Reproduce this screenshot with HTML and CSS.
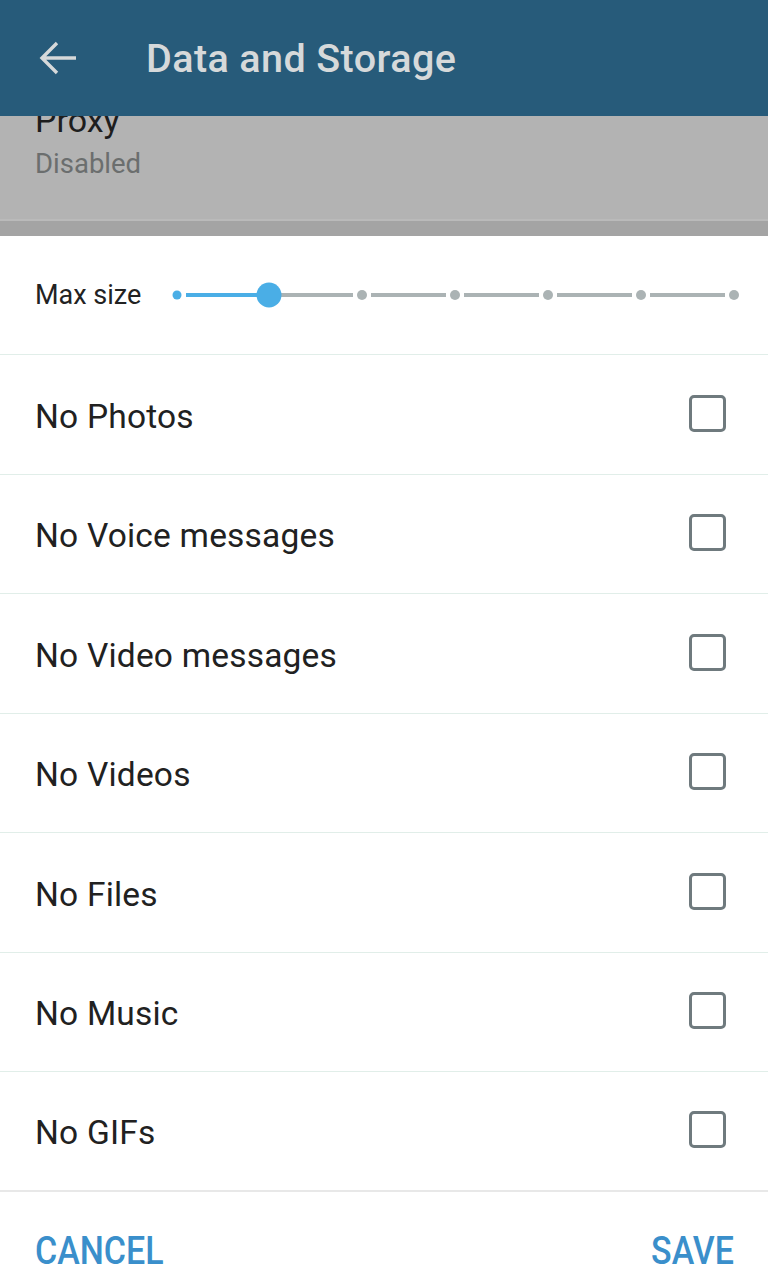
FILE: index.html
```html
<!DOCTYPE html>
<html lang="en">
<head>
  <meta charset="UTF-8">
  <meta name="viewport" content="width=device-width, initial-scale=1.0">
  <title>Data and Storage</title>
  <link rel="stylesheet" href="styles.css">
</head>
<body>
  <header class="topbar">
    <svg class="back" width="42" height="42" viewBox="0 0 42 42">
      <path d="M39 21H5M20 6L5 21l15 15" fill="none" stroke="#d6d9da" stroke-width="3.4"/>
    </svg>
    <h1>Data and Storage</h1>
  </header>

  <section class="behind">
    <p class="behind-title">Proxy</p>
    <p class="behind-sub">Disabled</p>
    <div class="behind-gap"></div>
  </section>

  <main class="sheet">
    <div class="size-row">
      <span class="size-label">Max size</span>
      <svg class="slider" width="574" height="40" viewBox="0 0 574 40">
        <line x1="16" y1="20" x2="99" y2="20" stroke="#4aaee6" stroke-width="4"/>
        <line x1="99" y1="20" x2="183" y2="20" stroke="#abb3b4" stroke-width="4"/>
        <line x1="201" y1="20" x2="276" y2="20" stroke="#abb3b4" stroke-width="4"/>
        <line x1="294" y1="20" x2="369" y2="20" stroke="#abb3b4" stroke-width="4"/>
        <line x1="387" y1="20" x2="462" y2="20" stroke="#abb3b4" stroke-width="4"/>
        <line x1="480" y1="20" x2="555" y2="20" stroke="#abb3b4" stroke-width="4"/>
        <circle cx="7" cy="20" r="4.5" fill="#4aaee6"/>
        <circle cx="192" cy="20" r="5" fill="#abb3b4"/>
        <circle cx="285" cy="20" r="5" fill="#abb3b4"/>
        <circle cx="378" cy="20" r="5" fill="#abb3b4"/>
        <circle cx="471" cy="20" r="5" fill="#abb3b4"/>
        <circle cx="564" cy="20" r="5" fill="#abb3b4"/>
        <circle cx="99" cy="20" r="12.5" fill="#4aaee6"/>
      </svg>
    </div>

    <ul class="options">
      <li><span>No Photos</span><i class="box"></i></li>
      <li><span>No Voice messages</span><i class="box"></i></li>
      <li><span>No Video messages</span><i class="box"></i></li>
      <li><span>No Videos</span><i class="box"></i></li>
      <li><span>No Files</span><i class="box"></i></li>
      <li><span>No Music</span><i class="box"></i></li>
      <li><span>No GIFs</span><i class="box"></i></li>
    </ul>

    <div class="actions">
      <button>CANCEL</button>
      <button>SAVE</button>
    </div>
  </main>
</body>
</html>
```

FILE: styles.css
```css
* {
  margin: 0;
  padding: 0;
  box-sizing: border-box;
}

body {
  font-family: Roboto, "Noto Sans", sans-serif;
  background-color: #fff;
  width: 768px;
  height: 1280px;
  overflow: hidden;
}

.topbar {
  height: 116px;
  background-color: #275b7a;
  display: flex;
  align-items: center;
  padding-left: 37px;
  position: relative;
  z-index: 1;
}

.topbar h1 {
  margin-left: 67px;
  font-size: 39.5px;
  font-weight: 500;
  color: #d6d9da;
  letter-spacing: 0.4px;
}

.behind {
  height: 120px;
  background-color: #b3b3b3;
  padding-left: 35px;
  display: flex;
  flex-direction: column;
}

.behind-title {
  font-size: 34px;
  color: #1e1e1e;
  line-height: 40px;
  margin-top: -16px;
}

.behind-sub {
  font-size: 27.5px;
  color: #6b6e6e;
  line-height: 32px;
  margin-top: 8px;
}

.behind-gap {
  margin: auto 0 0 -35px;
  height: 17px;
  background-color: #a4a4a4;
  border-top: 2px solid #bababa;
}

.sheet {
  background-color: #fff;
}

.size-row {
  height: 119px;
  display: flex;
  align-items: center;
  padding-left: 35px;
  border-bottom: 1px solid #e1eee9;
}

.size-label {
  font-size: 27px;
  color: #222;
  width: 135px;
}

.slider {
  display: block;
}

.options {
  list-style: none;
}

.options li {
  height: 119.5px;
  display: flex;
  align-items: center;
  justify-content: space-between;
  padding: 4px 42px 0 35px;
  border-bottom: 1px solid #e1eee9;
  font-size: 33.5px;
  letter-spacing: 0.2px;
  color: #212121;
}

.options li:last-child {
  border-bottom: 2px solid #e8e8e8;
}

.box {
  width: 37px;
  height: 37px;
  margin-top: -6px;
  border: 3.5px solid #6f7a7e;
  border-radius: 5px;
}

.actions {
  display: flex;
  justify-content: space-between;
  padding: 38px 34px 0 35px;
}

.actions button {
  background: none;
  border: none;
  font-family: Roboto, sans-serif;
  font-size: 34px;
  font-weight: 500;
  color: #3a8fcb;
  transform: scaleY(1.15);
}
```
